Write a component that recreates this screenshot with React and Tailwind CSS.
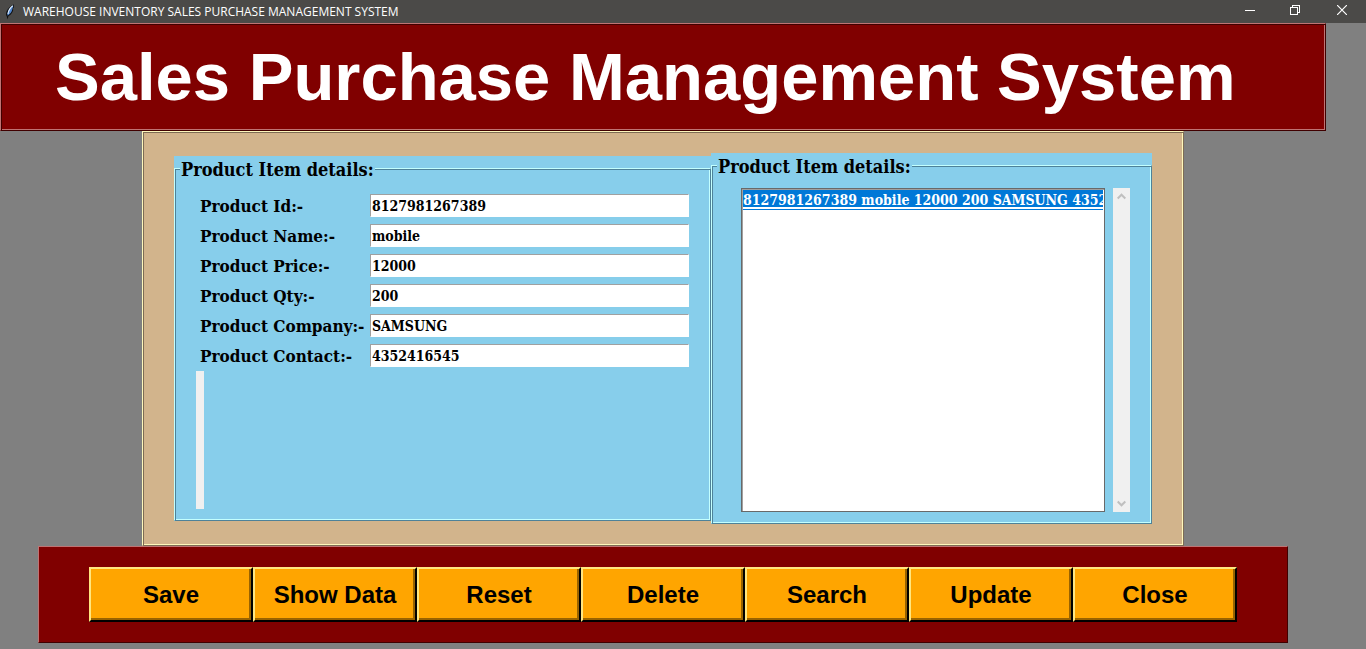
const serif = "font-['DejaVu_Serif_Condensed','DejaVu_Serif',serif]";

const fields = [
  { id: "product-id", label: "Product Id:-", value: "8127981267389" },
  { id: "product-name", label: "Product Name:-", value: "mobile" },
  { id: "product-price", label: "Product Price:-", value: "12000" },
  { id: "product-qty", label: "Product Qty:-", value: "200" },
  { id: "product-company", label: "Product Company:-", value: "SAMSUNG" },
  { id: "product-contact", label: "Product Contact:-", value: "4352416545" },
];

const actions = ["Save", "Show Data", "Reset", "Delete", "Search", "Update", "Close"];

function Feather() {
  return (
    <svg width="10" height="16" viewBox="0 0 10 16" aria-hidden="true">
      <path d="M9 .5C6.500 1 3 4 1.500 7.500c-.8 2-.5 4 .3 5L2.500 15.500 3.500 12C6 11 8 8 8.300 5.500L7.500 5.500 9 3z" fill="#111" />
      <path d="M8.300 1.300C6 2.500 3.300 5.500 2.600 8.500L2.300 11.500 3.500 11C5.500 9.500 7 7.500 7.200 5.500L8 3z" fill="#4f86cf" />
      <path d="M7.800 1.800C5.500 3.500 3.500 6.500 3 10" fill="none" stroke="#e4effb" strokeWidth="1.100" />
    </svg>
  );
}

function TitleBar() {
  return (
    <div className="flex h-[23px] items-center justify-between bg-[#4b4a48] pl-[5px] text-white">
      <div className="flex items-center gap-2">
        <Feather />
        <span className="font-['Open_Sans','Noto_Sans',sans-serif] text-[12px] leading-4">
          WAREHOUSE INVENTORY SALES PURCHASE MANAGEMENT SYSTEM
        </span>
      </div>
      <div className="flex h-full pb-[3px]">
        <button aria-label="Minimize" className="grid w-[46px] place-items-center">
          <svg width="10" height="10" viewBox="0 0 10 10" shapeRendering="crispEdges"><path d="M0 5.500H10" stroke="#fff" /></svg>
        </button>
        <button aria-label="Restore" className="grid w-11 place-items-center">
          <svg width="10" height="10" viewBox="0 0 10 10" fill="none" stroke="#fff" shapeRendering="crispEdges">
            <path d="M.5 2.500H7.500V9.500H.5zM2.500 2.500V.5H9.500V7.500H7.500" />
          </svg>
        </button>
        <button aria-label="Close window" className="grid w-[49px] place-items-center">
          <svg width="10" height="10" viewBox="0 0 10 10" stroke="#fff" strokeWidth="1.200"><path d="M0 0 10 10M10 0 0 10" /></svg>
        </button>
      </div>
    </div>
  );
}

function Group({ className, children }) {
  return (
    <div className={`flex min-w-0 bg-[#87ceeb] ${className}`}>
      <fieldset className="min-w-0 flex-1 border border-[#c3ffff] border-r-[#4e8299] border-b-[#4e8299] shadow-[inset_1px_1px_#4e8299,inset_-1px_-1px_#c3ffff]">
        <legend className={`ml-[5px] bg-[#87ceeb] px-px pt-[3px] text-[18px] leading-[21px] font-bold ${serif}`}>
          Product Item details:
        </legend>
        {children}
      </fieldset>
    </div>
  );
}

function Arrow({ d, label }) {
  return (
    <button aria-label={label} className="grid h-[17px] w-full place-items-center">
      <svg width="9" height="7" viewBox="0 0 9 7" fill="none" stroke="#bfbfbf" strokeWidth="2"><path d={d} /></svg>
    </button>
  );
}

export default function App() {
  return (
    <div className="min-h-screen bg-[#808080] text-black">
      <TitleBar />
      <div className="mr-10">
        <header className="border border-[#c07373] border-r-[#400000] border-b-[#400000] bg-[#800000] pl-[54px] shadow-[inset_1px_1px_#400000,inset_-1px_-1px_#c07373]">
          <h1 className="font-['Liberation_Sans',Arial,sans-serif] text-[67px] leading-[106px] font-bold whitespace-nowrap text-white">
            Sales Purchase Management System
          </h1>
        </header>

        <main className="mx-auto flex max-w-[1042px] items-start border border-[#fff8bc] border-r-[#7d6c54] border-b-[#7d6c54] bg-[#d2b48c] px-[31px] py-[21px] shadow-[inset_1px_1px_#7d6c54,inset_-1px_-1px_#fff8bc]">
          <Group className="mt-[3px] min-h-[365px] flex-[537]">
            <div className="flex flex-col gap-[7px] pt-[14px] pr-[21px] pl-[25px]">
              {fields.map((f) => (
                <div key={f.id} className="flex items-center">
                  <label htmlFor={f.id} className={`w-[170px] shrink-0 pt-[2px] text-[17px] leading-[21px] font-bold whitespace-nowrap ${serif}`}>
                    {f.label}
                  </label>
                  <input
                    id={f.id}
                    defaultValue={f.value}
                    className={`h-[23px] min-w-0 flex-1 border border-[#a0a0a0] border-r-white border-b-white bg-white px-px text-[14px] leading-5 font-bold outline-none ${serif}`}
                  />
                </div>
              ))}
            </div>
            <div className="mt-1 ml-[21px] h-[138px] w-2 bg-[#f0f0f0]" />
          </Group>

          <Group className="min-h-[371px] flex-[441]">
            <div className="flex gap-2 pt-[11px] pr-[21px] pl-[29px]">
              <div className="h-[324px] min-w-0 flex-1 border border-[#696969] bg-white">
                <ul role="listbox" aria-label="Products" className="h-full overflow-hidden border-t border-l border-[#a0a0a0] pr-px">
                  <li
                    role="option"
                    aria-selected="true"
                    className={`overflow-hidden border-b border-[#0078d7] text-[14px] font-bold whitespace-nowrap text-white ${serif}`}
                  >
                    <span className="block border-b-2 border-white bg-[#0078d7] pt-[3px] leading-[14px]">
                      8127981267389 mobile 12000 200 SAMSUNG 4352416545
                    </span>
                  </li>
                </ul>
              </div>
              <div className="flex w-[17px] flex-col justify-between bg-[#f0f0f0]">
                <Arrow label="Scroll up" d="M.7 5.500 4.500 1.700 8.300 5.500" />
                <Arrow label="Scroll down" d="M.7 1.500 4.500 5.300 8.300 1.500" />
              </div>
            </div>
          </Group>
        </main>

        <footer className="mx-[38px] flex border border-[#c07373] border-r-[#400000] border-b-[#400000] bg-[#800000] px-[50px] py-5">
          {actions.map((a) => (
            <button
              key={a}
              className="h-[55px] min-w-0 flex-1 border-2 border-[#ffe680] border-r-black border-b-black bg-[#ffa500] font-['Liberation_Sans',Arial,sans-serif] text-2xl font-bold shadow-[inset_-2px_-2px_#996300]"
            >
              {a}
            </button>
          ))}
        </footer>
      </div>
    </div>
  );
}
